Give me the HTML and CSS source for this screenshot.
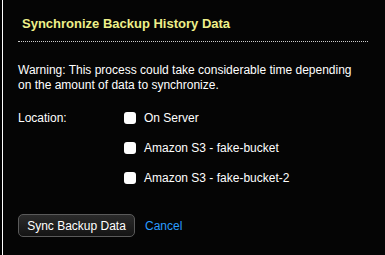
FILE: index.html
```html
<!DOCTYPE html>
<html lang="en">
<head>
    <meta charset="UTF-8">
    <title>Synchronize Backup History Data</title>
    <link rel="stylesheet" href="styles.css">
</head>
<body>
    <div class="dialog">
        <div class="dialog-header">
            <h2>Synchronize Backup History Data</h2>
        </div>
        <p class="warning">Warning: This process could take considerable time depending on the amount of data to synchronize.</p>
        <div class="locations">
            <span class="locations-label">Location:</span>
            <div class="locations-list">
                <label class="location-item"><input type="checkbox"> On Server</label>
                <label class="location-item"><input type="checkbox"> Amazon S3 - fake-bucket</label>
                <label class="location-item"><input type="checkbox"> Amazon S3 - fake-bucket-2</label>
            </div>
        </div>
        <div class="actions">
            <button type="button" class="btn-sync">Sync Backup Data</button>
            <a href="#" class="cancel">Cancel</a>
        </div>
    </div>
</body>
</html>
```

FILE: styles.css
```css
html, body {
    margin: 0;
    padding: 0;
    background-color: #000;
}
body {
    font-family: 'Liberation Sans', Arial, sans-serif;
    font-size: 12px;
    color: #fff;
    height: 255px;
}
.dialog {
    margin-left: 2px;
    border-left: 1px solid #fff;
    height: 255px;
    padding: 15px 17px 0 15px;
    box-sizing: border-box;
    background-color: #050505;
}
.dialog-header {
    padding: 0 0 8px 4px;
    border-bottom: 1px dotted #ccc;
}
.dialog-header h2 {
    margin: 0;
    font-size: 13px;
    line-height: 18px;
    font-weight: bold;
    color: #eef08a;
}
.warning {
    margin: 21px 0 0 0;
    line-height: 15px;
}
.locations {
    display: flex;
    margin-top: 16px;
}
.locations-label {
    width: 106px;
    line-height: 18px;
}
.locations-list {
    display: flex;
    flex-direction: column;
    gap: 12px;
}
.location-item {
    display: flex;
    align-items: center;
    gap: 8px;
    height: 18px;
}
.location-item input {
    appearance: none;
    margin: 0;
    width: 12px;
    height: 12px;
    border-radius: 3px;
    background-color: #fff;
}
.actions {
    display: flex;
    align-items: center;
    gap: 10px;
    margin-top: 27px;
}
.btn-sync {
    font-family: inherit;
    font-size: 12px;
    color: #fff;
    height: 23px;
    width: 117px;
    padding: 0;
    border: 1px solid #5a5a5a;
    border-radius: 5px;
    background: linear-gradient(#2b2b2b, #141414);
}
.cancel {
    color: #2a9cff;
    text-decoration: none;
}
```
